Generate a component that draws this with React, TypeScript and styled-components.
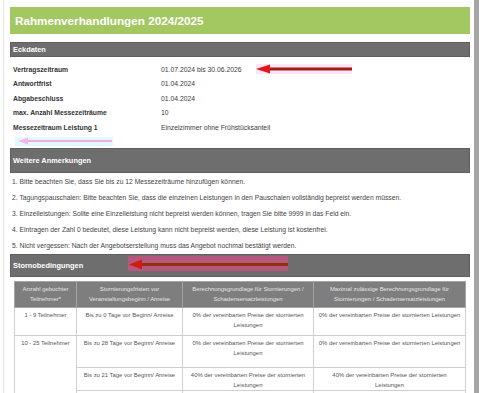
import { Fragment } from 'react';
import styled, { createGlobalStyle } from 'styled-components';

const GlobalStyle = createGlobalStyle`
  html, body {
    margin: 0;
    padding: 0;
    background: #ffffff;
  }
  body {
    font-family: "Liberation Sans", Arial, sans-serif;
    overflow: hidden;
  }
`;

const Page = styled.div`
  position: relative;
  display: flex;
  align-items: flex-start;
  width: 479px;
  height: 393px;
  overflow: hidden;
  background: #fff;
`;

const LeftRule = styled.div`
  width: 3px;
  height: 100%;
  flex: none;
  border-right: 1px solid #e4e6e2;
`;

const Content = styled.div`
  width: 460px;
  margin-left: 6px;
  flex: none;
  display: flex;
  flex-direction: column;
  & > * {
    flex-shrink: 0;
  }
`;

const ScrollBar = styled.div`
  width: 5px;
  height: 100%;
  margin-left: 4px;
  flex: none;
  background: #a6a6a6;
`;

const TitleBar = styled.div`
  margin-top: 7px;
  height: 27px;
  background: #a3c862;
  color: #fff;
  display: flex;
  align-items: center;
  padding-left: 5px;
  font-size: 11.7px;
  font-weight: bold;
`;

const SectionHeader = styled.div<{ $height: number; $gap: number }>`
  margin-top: ${({ $gap }) => $gap}px;
  height: ${({ $height }) => $height}px;
  background: #6e6e6e;
  border: 1px solid #5f5f5f;
  box-sizing: border-box;
  color: #fff;
  display: flex;
  align-items: center;
  padding-left: 2px;
  font-size: 7.4px;
  font-weight: bold;
`;

const DataGrid = styled.div`
  display: grid;
  grid-template-columns: 148px 1fr;
  grid-auto-rows: 14.5px;
  align-items: center;
  padding: 4.75px 0 0 3px;
  font-size: 6.8px;
  color: #3c3c3c;
  .label {
    font-weight: bold;
    color: #333;
  }
`;

const NoteList = styled.ol`
  list-style: none;
  margin: 0;
  padding: 0 0 0 2px;
  font-size: 6.75px;
  color: #444;
  li {
    height: 16px;
    display: flex;
    align-items: center;
  }
`;

const Table = styled.table`
  margin: 4px 0 0 4px;
  width: 451px;
  border-collapse: collapse;
  table-layout: fixed;
  font-size: 5.9px;
  line-height: 9.5px;
  text-align: center;
  border: 1px solid #9a9a9a;
  th {
    background: #7e7e7e;
    color: #e4e4e4;
    font-weight: normal;
    height: 25px;
    padding: 0 4px;
    border: 1px solid #a5a5a5;
    vertical-align: middle;
  }
  td {
    color: #555;
    padding: 3px 4px 0;
    border: 1px solid #cfcfcf;
    vertical-align: top;
  }
  tbody.group {
    border-top: 1.5px solid #8a8a8a;
  }
`;

const Row = styled.tr<{ $height: number }>`
  height: ${({ $height }) => $height}px;
`;

const Overlay = styled.svg`
  position: absolute;
  left: 0;
  top: 0;
  pointer-events: none;
`;

const facts = [
  ['Vertragszeitraum', '01.07.2024 bis 30.06.2026'],
  ['Antwortfrist', '01.04.2024'],
  ['Abgabeschluss', '01.04.2024'],
  ['max. Anzahl Messezeiträume', '10'],
  ['Messezeitraum Leistung 1', 'Einzelzimmer ohne Frühstücksanteil'],
];

const notes = [
  '1. Bitte beachten Sie, dass Sie bis zu 12 Messezeiträume hinzufügen können.',
  '2. Tagungspauschalen: Bitte beachten Sie, dass die einzelnen Leistungen in den Pauschalen vollständig bepreist werden müssen.',
  '3. Einzelleistungen: Sollte eine Einzelleistung nicht bepreist werden können, tragen Sie bitte 9999 in das Feld ein.',
  '4. Eintragen der Zahl 0 bedeutet, diese Leistung kann nicht bepreist werden, diese Leistung ist kostenfrei.',
  '5. Nicht vergessen: Nach der Angebotserstellung muss das Angebot nochmal bestätigt werden.',
];

const Arrows = () => (
  <Overlay width="479" height="393" viewBox="0 0 479 393">
    {/* Vertragszeitraum */}
    <rect x="256" y="64" width="96" height="10" fill="#fbe0f2" opacity="0.8" />
    <line x1="266" y1="69" x2="352" y2="69" stroke="#9e1a12" strokeWidth="3" />
    <polygon points="256,69 270,64.5 270,73.5" fill="#e01818" />
    {/* faint marker under the facts */}
    <rect x="15" y="137" width="98" height="9" fill="#dff9ff" opacity="0.9" />
    <line x1="26" y1="141" x2="112" y2="141" stroke="#f3a9e6" strokeWidth="2" />
    <polygon points="18,141 28,137.5 28,144.5" fill="#f6b8ec" />
    {/* Stornobedingungen */}
    <rect x="128" y="256" width="160" height="15" fill="#c2557f" opacity="0.85" />
    <line x1="140" y1="264.5" x2="288" y2="264.5" stroke="#8e3212" strokeWidth="3" />
    <polygon points="129,264.5 142,259.5 142,269.5" fill="#d01c10" />
  </Overlay>
);

export default function App() {
  return (
    <Page>
      <GlobalStyle />
      <LeftRule />
      <Content>
        <TitleBar>Rahmenverhandlungen 2024/2025</TitleBar>

        <SectionHeader $height={15} $gap={8}>Eckdaten</SectionHeader>
        <DataGrid>
          {facts.map(([label, value]) => (
            <Fragment key={label}>
              <span className="label">{label}</span>
              <span>{value}</span>
            </Fragment>
          ))}
        </DataGrid>

        <SectionHeader $height={25} $gap={13.75}>Weitere Anmerkungen</SectionHeader>
        <NoteList>
          {notes.map((n) => (
            <li key={n}>{n}</li>
          ))}
        </NoteList>

        <SectionHeader $height={23} $gap={1}>Stornobedingungen</SectionHeader>
        <Table>
          <colgroup>
            <col style={{ width: 62 }} />
            <col style={{ width: 106 }} />
            <col style={{ width: 131 }} />
            <col style={{ width: 152 }} />
          </colgroup>
          <thead>
            <tr>
              <th>Anzahl gebuchter Teilnehmer*</th>
              <th>Stornierungsfristen vor Veranstaltungsbeginn / Anreise</th>
              <th>Berechnungsgrundlage für Stornierungen / Schadensersatzleistungen</th>
              <th>Maximal zulässige Berechnungsgrundlage für Stornierungen / Schadensersatzleistungen</th>
            </tr>
          </thead>
          <tbody>
            <Row $height={28}>
              <td>1 - 9 Teilnehmer</td>
              <td>Bis zu 0 Tage vor Beginn/ Anreise</td>
              <td>0% der vereinbarten Preise der stornierten Leistungen</td>
              <td>0% der vereinbarten Preise der stornierten Leistungen</td>
            </Row>
          </tbody>
          <tbody className="group">
            <Row $height={32}>
              <td rowSpan={3}>10 - 25 Teilnehmer</td>
              <td>Bis zu 28 Tage vor Beginn/ Anreise</td>
              <td>0% der vereinbarten Preise der stornierten Leistungen</td>
              <td>0% der vereinbarten Preise der stornierten Leistungen</td>
            </Row>
            <Row $height={22}>
              <td>Bis zu 21 Tage vor Beginn/ Anreise</td>
              <td>40% der vereinbarten Preise der stornierten Leistungen</td>
              <td>40% der vereinbarten Preise der stornierten Leistungen</td>
            </Row>
            <Row $height={28}>
              <td />
              <td />
              <td />
            </Row>
          </tbody>
        </Table>
      </Content>
      <ScrollBar />
      <Arrows />
    </Page>
  );
}
